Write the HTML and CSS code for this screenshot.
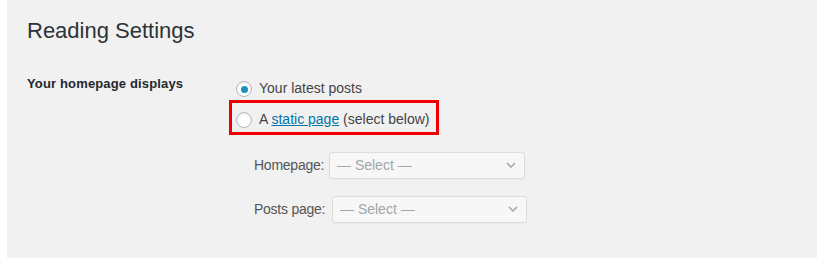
FILE: index.html
```html
<!DOCTYPE html>
<html>
<head>
<meta charset="utf-8">
<link rel="stylesheet" href="styles.css">
</head>
<body>
<div class="wrap">
  <h1 class="title">Reading Settings</h1>
  <div class="row">
    <div class="th">Your homepage displays</div>
    <div class="td">
      <label class="opt">
        <span class="radio checked"></span>
        <span>Your latest posts</span>
      </label>
      <label class="opt opt-static">
        <span class="radio"></span>
        <span>A <a class="link" href="#">static page</a> (select below)</span>
      </label>
      <div class="pages">
        <div class="page-row">
          <span class="page-label lbl-home">Homepage:</span>
          <div class="select sel-home">
            <span>— Select —</span>
            <svg class="chev" width="10" height="6" viewBox="0 0 10 6"><path d="M1 1 L5 5 L9 1" fill="none" stroke="#a7aaad" stroke-width="1.6"/></svg>
          </div>
        </div>
        <div class="page-row">
          <span class="page-label lbl-posts">Posts page:</span>
          <div class="select sel-posts">
            <span>— Select —</span>
            <svg class="chev" width="10" height="6" viewBox="0 0 10 6"><path d="M1 1 L5 5 L9 1" fill="none" stroke="#a7aaad" stroke-width="1.6"/></svg>
          </div>
        </div>
      </div>
    </div>
  </div>
</div>
</body>
</html>
```
FILE: styles.css
```css
html, body {
  margin: 0;
  padding: 0;
  background: #ffffff;
}
body {
  font-family: "Liberation Sans", Arial, sans-serif;
}
.wrap {
  margin-left: 7px;
  width: 810px;
  height: 258px;
  box-sizing: border-box;
  background: #f1f1f1;
  padding: 17px 20px 0 20px;
}
.title {
  margin: 0;
  font-size: 22px;
  line-height: 28px;
  font-weight: normal;
  color: #2c3338;
}
.row {
  display: flex;
  margin-top: 29px;
}
.th {
  width: 209px;
  flex: none;
  font-size: 13px;
  letter-spacing: 0.15px;
  font-weight: bold;
  line-height: 20px;
  color: #23282d;
}
.td {
  padding-top: 3.5px;
  font-size: 14px;
  line-height: 20px;
  color: #444;
}
.opt {
  display: flex;
  align-items: center;
  gap: 7px;
  height: 20px;
}
.opt-static {
  position: relative;
  margin-top: 11px;
}
.opt-static::before {
  content: "";
  position: absolute;
  left: -7px;
  top: -9px;
  width: 210px;
  height: 35px;
  box-sizing: border-box;
  border: 3px solid #f00000;
}
.radio {
  width: 16px;
  height: 16px;
  box-sizing: border-box;
  border-radius: 50%;
  border: 1px solid #b4b9be;
  background: #fff;
  box-shadow: inset 0 1px 2px rgba(0,0,0,0.1);
  margin-top: 3px;
  display: flex;
  align-items: center;
  justify-content: center;
  flex: none;
}
.radio.checked::after {
  content: "";
  width: 7px;
  height: 7px;
  border-radius: 50%;
  background: #1e8cbe;
}
.link {
  color: #0073aa;
  text-decoration: underline;
}
.pages {
  margin-top: 23px;
  padding-left: 18px;
  display: flex;
  flex-direction: column;
  gap: 17px;
}
.page-row {
  display: flex;
  align-items: center;
  color: #555;
}
.page-label {
  white-space: nowrap;
  flex: none;
  letter-spacing: -0.25px;
}
.lbl-home {
  width: 75px;
}
.lbl-posts {
  width: 78px;
}
.select {
  height: 27px;
  box-sizing: border-box;
  border: 1px solid #dcdcdc;
  border-radius: 3px;
  background: #f7f7f7;
  box-shadow: 0 1px 1px rgba(0,0,0,0.03);
  display: flex;
  align-items: center;
  justify-content: space-between;
  padding: 0 8px 0 7px;
  color: #a0a5aa;
}
.sel-home {
  width: 196px;
}
.sel-posts {
  width: 195px;
}
.chev {
  display: block;
}
```
